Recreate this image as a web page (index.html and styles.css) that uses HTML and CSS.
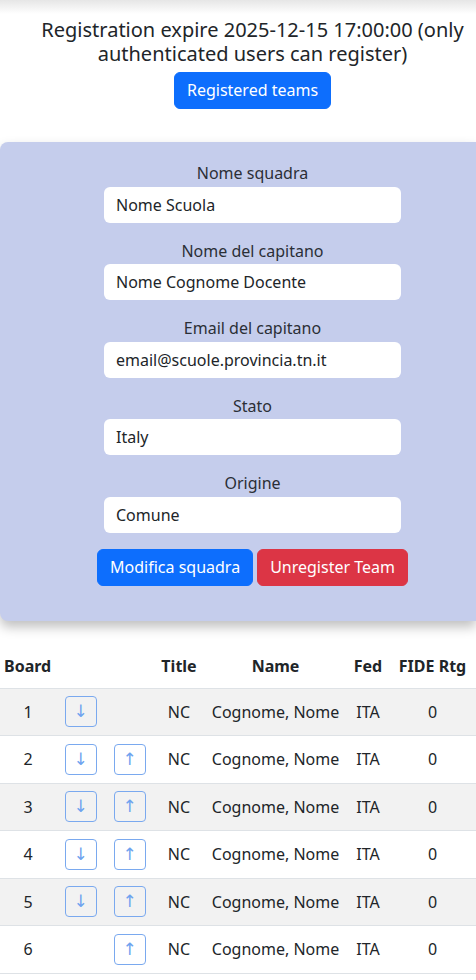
FILE: index.html
```html
<!DOCTYPE html>
<html lang="en">
<head>
    <meta charset="UTF-8">
    <meta name="viewport" content="width=device-width, initial-scale=1.0">
    <title>Team registration</title>
    <link rel="stylesheet" href="styles.css">
</head>
<body>

    <div class="top-shade"></div>

    <div class="intro">
        <p class="expire">Registration expire 2025-12-15 17:00:00 (only authenticated users can register)</p>
        <button class="btn btn-primary">Registered teams</button>
    </div>

    <!-- Team form -->
    <form class="team-card">
        <label for="team-name">Nome squadra</label>
        <input type="text" id="team-name" value="Nome Scuola" />

        <label for="captain-name">Nome del capitano</label>
        <input type="text" id="captain-name" value="Nome Cognome Docente" />

        <label for="captain-email">Email del capitano</label>
        <input type="text" id="captain-email" value="email@scuole.provincia.tn.it" />

        <label for="country">Stato</label>
        <input type="text" id="country" value="Italy" />

        <label for="origin">Origine</label>
        <input type="text" id="origin" value="Comune" />

        <div class="form-actions">
            <button type="button" class="btn btn-primary">Modifica squadra</button>
            <button type="button" class="btn btn-danger">Unregister Team</button>
        </div>
    </form>

    <table class="players">
        <colgroup>
            <col class="col-board">
            <col class="col-move">
            <col class="col-move">
            <col class="col-title">
            <col class="col-name">
            <col class="col-fed">
            <col class="col-rtg">
        </colgroup>
        <thead>
            <tr>
                <th>Board</th>
                <th></th>
                <th></th>
                <th>Title</th>
                <th>Name</th>
                <th>Fed</th>
                <th>FIDE Rtg</th>
            </tr>
        </thead>
        <tbody>
            <tr>
                <td>1</td>
                <td><button class="btn-move">&darr;</button></td>
                <td></td>
                <td>NC</td>
                <td>Cognome, Nome</td>
                <td>ITA</td>
                <td>0</td>
            </tr>
            <tr>
                <td>2</td>
                <td><button class="btn-move">&darr;</button></td>
                <td><button class="btn-move">&uarr;</button></td>
                <td>NC</td>
                <td>Cognome, Nome</td>
                <td>ITA</td>
                <td>0</td>
            </tr>
            <tr>
                <td>3</td>
                <td><button class="btn-move">&darr;</button></td>
                <td><button class="btn-move">&uarr;</button></td>
                <td>NC</td>
                <td>Cognome, Nome</td>
                <td>ITA</td>
                <td>0</td>
            </tr>
            <tr>
                <td>4</td>
                <td><button class="btn-move">&darr;</button></td>
                <td><button class="btn-move">&uarr;</button></td>
                <td>NC</td>
                <td>Cognome, Nome</td>
                <td>ITA</td>
                <td>0</td>
            </tr>
            <tr>
                <td>5</td>
                <td><button class="btn-move">&darr;</button></td>
                <td><button class="btn-move">&uarr;</button></td>
                <td>NC</td>
                <td>Cognome, Nome</td>
                <td>ITA</td>
                <td>0</td>
            </tr>
            <tr>
                <td>6</td>
                <td></td>
                <td><button class="btn-move">&uarr;</button></td>
                <td>NC</td>
                <td>Cognome, Nome</td>
                <td>ITA</td>
                <td>0</td>
            </tr>
        </tbody>
    </table>

</body>
</html>
```

FILE: styles.css
```css
body {
    font-family: 'Noto Sans', 'Open Sans', sans-serif;
    font-size: 16px;
    color: #212529;
    background: #ffffff;
    margin: 0;
}

.top-shade {
    height: 14px;
    background: linear-gradient(#e6e6e6, #ffffff);
}

.intro {
    padding-left: 29px;
    text-align: center;
}

.expire {
    font-size: 20px;
    line-height: 24px;
    margin: 4px 0 6px 0;
}

/* Buttons */
.btn {
    font-family: inherit;
    font-size: 16px;
    line-height: 23px;
    color: #ffffff;
    border: 1px solid transparent;
    border-radius: 6px;
    padding: 6px 12px;
    cursor: pointer;
}

.btn-primary {
    background-color: #0d6efd;
    border-color: #0d6efd;
}

.btn-danger {
    background-color: #dc3545;
    border-color: #dc3545;
}

/* Team form */
.team-card {
    margin-top: 33px;
    background-color: #c5cdec;
    border-radius: 8px 0 0 8px;
    box-shadow: 0 6px 12px rgba(0, 0, 0, 0.25);
    padding: 19px 0 35px 29px;
    display: flex;
    flex-direction: column;
    align-items: center;
}

.team-card label {
    line-height: 24px;
    color: #2b2f36;
    margin-bottom: 1.5px;
}

.team-card input {
    font-family: inherit;
    font-size: 16px;
    color: #212529;
    width: 297px;
    height: 36px;
    box-sizing: border-box;
    padding: 6px 12px;
    border: none;
    border-radius: 6px;
    background: #ffffff;
    margin-bottom: 16px;
}

.form-actions {
    display: flex;
    gap: 4px;
}

/* Players table */
.players {
    width: 100%;
    margin-top: 27px;
    border-collapse: collapse;
    table-layout: fixed;
}

.col-board { width: 56px; }
.col-move { width: 49px; }
.col-title { width: 50px; }
.col-name { width: 143px; }
.col-fed { width: 42px; }
.col-rtg { width: 87px; }

.players th {
    font-weight: bold;
    text-align: center;
    height: 37px;
    padding: 0 0 3px 0;
    border-bottom: 1px solid #dee2e6;
    white-space: nowrap;
}

.players th:first-child {
    text-align: left;
    padding-left: 4px;
}

.players td {
    text-align: center;
    height: 46.5px;
    padding: 0;
    border-bottom: 1px solid #dee2e6;
    white-space: nowrap;
}

.players tbody tr:nth-child(odd) td {
    background-color: #f2f2f2;
}

.btn-move {
    width: 32px;
    height: 31px;
    font-family: 'DejaVu Sans', sans-serif;
    font-size: 17px;
    line-height: 1;
    color: #6ea3ef;
    background: transparent;
    border: 1.5px solid #7aa9ef;
    border-radius: 4px;
    padding: 0;
    cursor: pointer;
}
```
